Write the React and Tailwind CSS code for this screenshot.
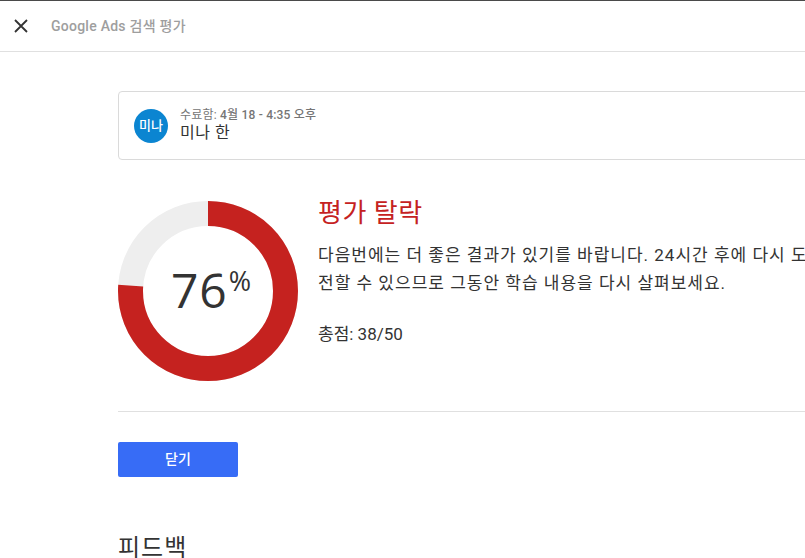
import React from "react";

function Donut() {
  const r = 77.5;
  const c = 2 * Math.PI * r;
  return (
    <div className="relative w-[180px] h-[180px] shrink-0">
      <svg width="180" height="180" viewBox="0 0 180 180" className="block">
        <circle cx="90" cy="90" r={r} fill="none" stroke="#eeeeee" strokeWidth="25" />
        <circle
          cx="90"
          cy="90"
          r={r}
          fill="none"
          stroke="#c5221f"
          strokeWidth="25"
          strokeDasharray={`${c * 0.76} ${c}`}
          transform="rotate(-90 90 90)"
        />
      </svg>
      <div className="absolute inset-0 flex items-center justify-center">
        <div className="flex items-start text-[#333333] font-['Open_Sans',sans-serif] pl-[6px] -mt-[2px]">
          <span className="text-[48px] leading-none tracking-[1px]">76</span>
          <span className="text-[27px] leading-none ml-[1px] mt-[1px]">%</span>
        </div>
      </div>
    </div>
  );
}

export default function App() {
  return (
    <div className="w-[805px] h-[558px] overflow-hidden bg-white font-['Roboto','Noto_Sans_CJK_KR',sans-serif] border-t border-[#4a4a4a]">
      <div className="h-[51px] flex items-center border-b border-[#e0e0e0]">
        <div className="w-[51px] flex justify-center pl-[1px]">
          <svg width="16" height="16" viewBox="0 0 16 16" className="ml-[-11px]">
            <path d="M2 2 L14 14 M14 2 L2 14" stroke="#333333" strokeWidth="1.8" fill="none" />
          </svg>
        </div>
        <div className="text-[14px] font-medium text-[#9e9e9e] leading-none -mt-[1px] tracking-[0.25px]">
          Google Ads 검색 평가
        </div>
      </div>
      <div className="pl-[118px] w-[1000px]">
        <div className="mt-[39px] h-[69px] border border-[#dadada] rounded-[4px] flex items-center pl-[15px] gap-[12px]">
          <div className="w-[34px] h-[34px] rounded-full bg-[#0b85d1] flex items-center justify-center text-white text-[13px] font-medium">
            미나
          </div>
          <div className="flex flex-col -mt-[2px]">
            <div className="text-[12px] leading-[16px] text-[#757575] tracking-[0.2px]">
              수료함: <span className="font-medium">4월 18 - 4:35 오후</span>
            </div>
            <div className="text-[16px] leading-[20px] text-[#333333] tracking-[0.5px]">미나 한</div>
          </div>
        </div>
        <div className="mt-[41px] flex gap-[20px]">
          <Donut />
          <div className="w-[505px] -mt-[6px]">
            <div className="text-[26px] leading-[36px] text-[#c5221f] tracking-[0.5px]">평가 탈락</div>
            <div className="mt-[10px] text-[17px] leading-[28px] text-[#333333] tracking-[1px]">
              다음번에는 더 좋은 결과가 있기를 바랍니다. 24시간 후에 다시 도전할 수 있으므로 그동안 학습 내용을 다시 살펴보세요.
            </div>
            <div className="mt-[25px] text-[17px] leading-[24px] text-[#333333]">총점: 38/50</div>
          </div>
        </div>
        <div className="mt-[30px] border-t border-[#e0e0e0]" />
        <button className="mt-[30px] w-[120px] h-[35px] rounded-[2px] bg-[#376cf6] text-white text-[14px] font-medium flex items-center justify-center">
          닫기
        </button>
        <div className="mt-[55px] text-[24px] leading-[32px] text-[#333333] tracking-[1px]">피드백</div>
      </div>
    </div>
  );
}
